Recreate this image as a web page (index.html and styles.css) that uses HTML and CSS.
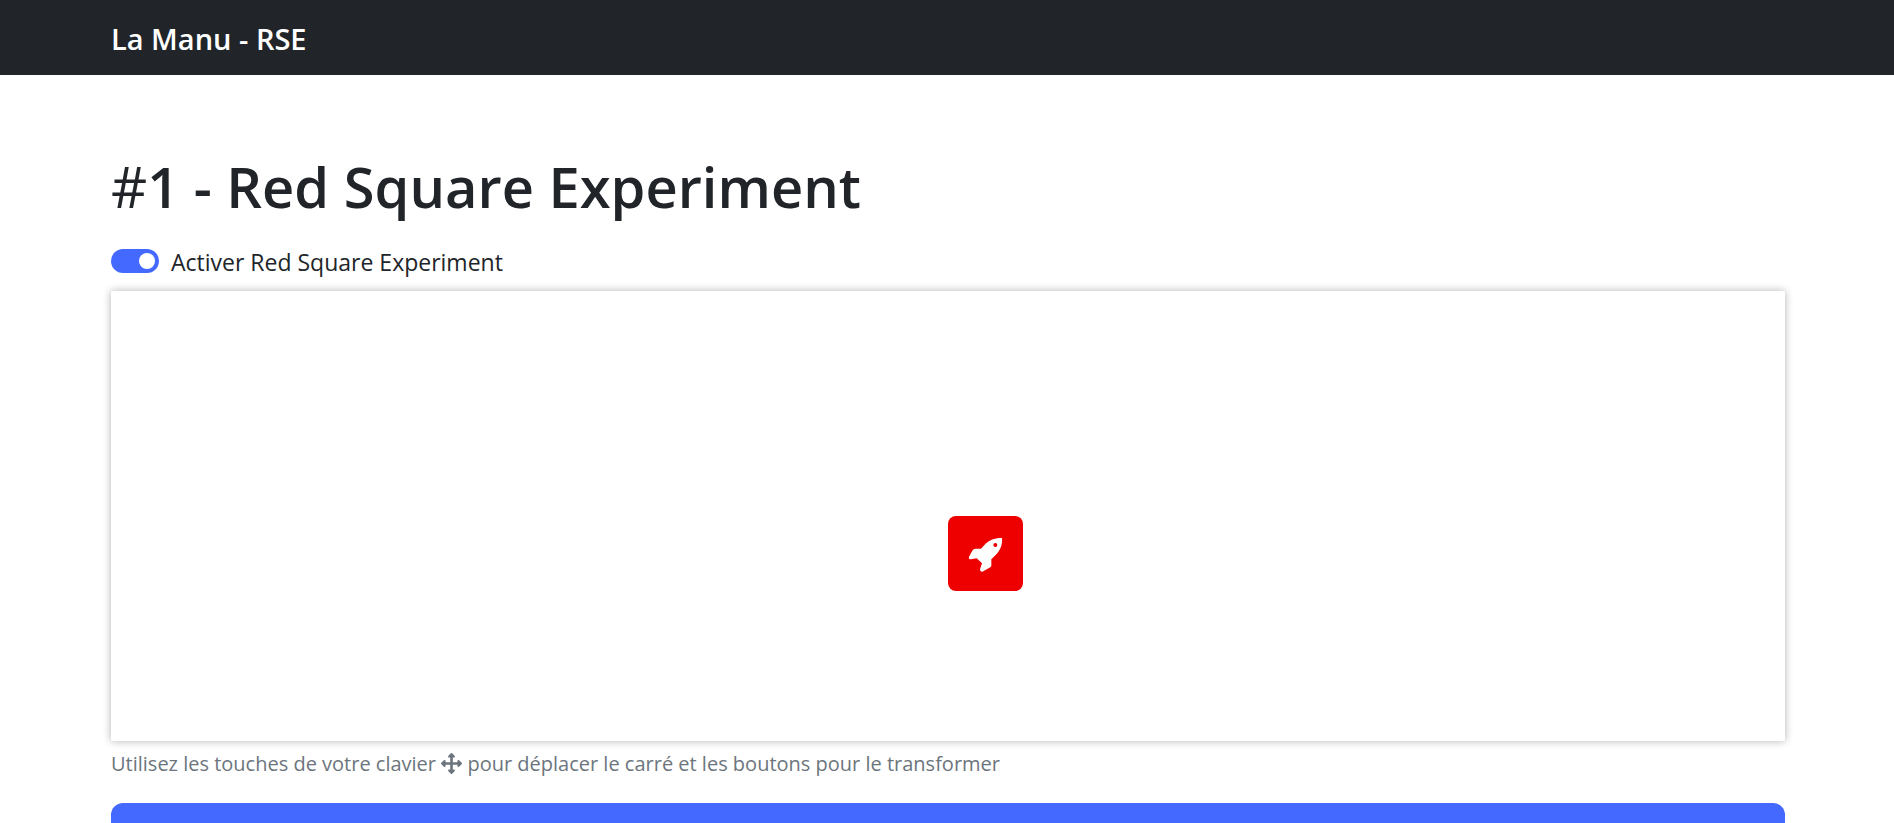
FILE: index.html
```html
<!DOCTYPE html>
<html lang="fr">
<head>
<meta charset="utf-8">
<meta name="viewport" content="width=device-width, initial-scale=1">
<title>La Manu - RSE</title>
<link rel="stylesheet" href="styles.css">
</head>
<body>
<header class="navbar">
  <a class="brand" href="#">La Manu - RSE</a>
</header>
<main class="content">
  <h1 class="title"><span class="hash">#</span>1 - Red Square Experiment</h1>
  <div class="switch">
    <input class="switch-input" type="checkbox" role="switch" id="activate" checked>
    <label class="switch-label" for="activate">Activer Red Square Experiment</label>
  </div>
  <div class="stage">
    <div class="square">
      <svg class="rocket" viewBox="0 0 132 132" aria-hidden="true"><path fill="currentColor" fill-rule="evenodd" d="M114 18C94 17 76 24 64 36L51 50H34Q29 50 26 55L15 74Q13 82 20 82L38 79L54 94L48 112Q48 120 55 119L79 106Q82 104 82 100V82L95 69C109 55 116 38 114 18ZM94 33a6 6 0 1 1 0 12 6 6 0 0 1 0-12Z"/></svg>
    </div>
  </div>
  <p class="hint">Utilisez les touches de votre clavier <svg class="arrows" viewBox="0 0 64 64" aria-hidden="true"><path fill="currentColor" d="M30 1Q32-1 34 1L42 9Q44 14 39 14H36V28H50V25Q50 20 55 22L63 30Q65 32 63 34L55 42Q50 44 50 39V36H36V50H39Q44 50 42 55L34 63Q32 65 30 63L22 55Q20 50 25 50H28V36H14V39Q14 44 9 42L1 34Q-1 32 1 30L9 22Q14 20 14 25V28H28V14H25Q20 14 22 9Z"/></svg> pour déplacer le carré et les boutons pour le transformer</p>
  <button class="action" type="button"></button>
</main>
</body>
</html>
```
FILE: styles.css
```css
* {
  box-sizing: border-box;
}

body {
  margin: 0;
  background: #fff;
  color: #212529;
  font-family: "Open Sans", "Noto Sans", sans-serif;
  font-size: 23px;
  line-height: 36px;
}

.navbar {
  display: flex;
  align-items: center;
  height: 75px;
  padding: 2px 109px 0 111px;
  background: #212529;
}

.brand {
  color: #fff;
  font-size: 29px;
  font-weight: 600;
  text-decoration: none;
}

.content {
  padding: 75px 109px 0 111px;
}

.title {
  margin: 0 0 21px;
  font-size: 56px;
  font-weight: 600;
  line-height: 72px;
}

.hash {
  font-weight: 400;
}

.switch {
  display: flex;
  align-items: center;
  gap: 12px;
  height: 36px;
  margin-bottom: 12px;
}

.switch-input {
  appearance: none;
  display: flex;
  justify-content: flex-end;
  align-items: center;
  width: 48px;
  height: 24px;
  margin: 0;
  padding: 0 4px;
  border-radius: 12px;
  background: #4369ff;
}

.switch-input::before {
  content: "";
  width: 16px;
  height: 16px;
  border-radius: 50%;
  background: #fff;
}

.switch-label {
  padding-top: 2px;
}

.stage {
  position: relative;
  height: 450px;
  background: #fff;
  box-shadow: 0 0 8px rgba(0, 0, 0, 0.3);
}

.square {
  position: absolute;
  top: 50%;
  left: 50%;
  display: flex;
  align-items: center;
  justify-content: center;
  width: 75px;
  height: 75px;
  border-radius: 8px;
  background: #ee0000;
  color: #fff;
}

.rocket {
  width: 44px;
  height: 44px;
}

.hint {
  margin: 7px 0 23px;
  color: #6c757d;
  font-size: 20px;
  line-height: 32px;
}

.arrows {
  width: 21px;
  height: 21px;
  vertical-align: -3px;
}

.action {
  display: block;
  width: 100%;
  height: 57px;
  border: 0;
  border-radius: 12px;
  background: #4369ff;
}
```
